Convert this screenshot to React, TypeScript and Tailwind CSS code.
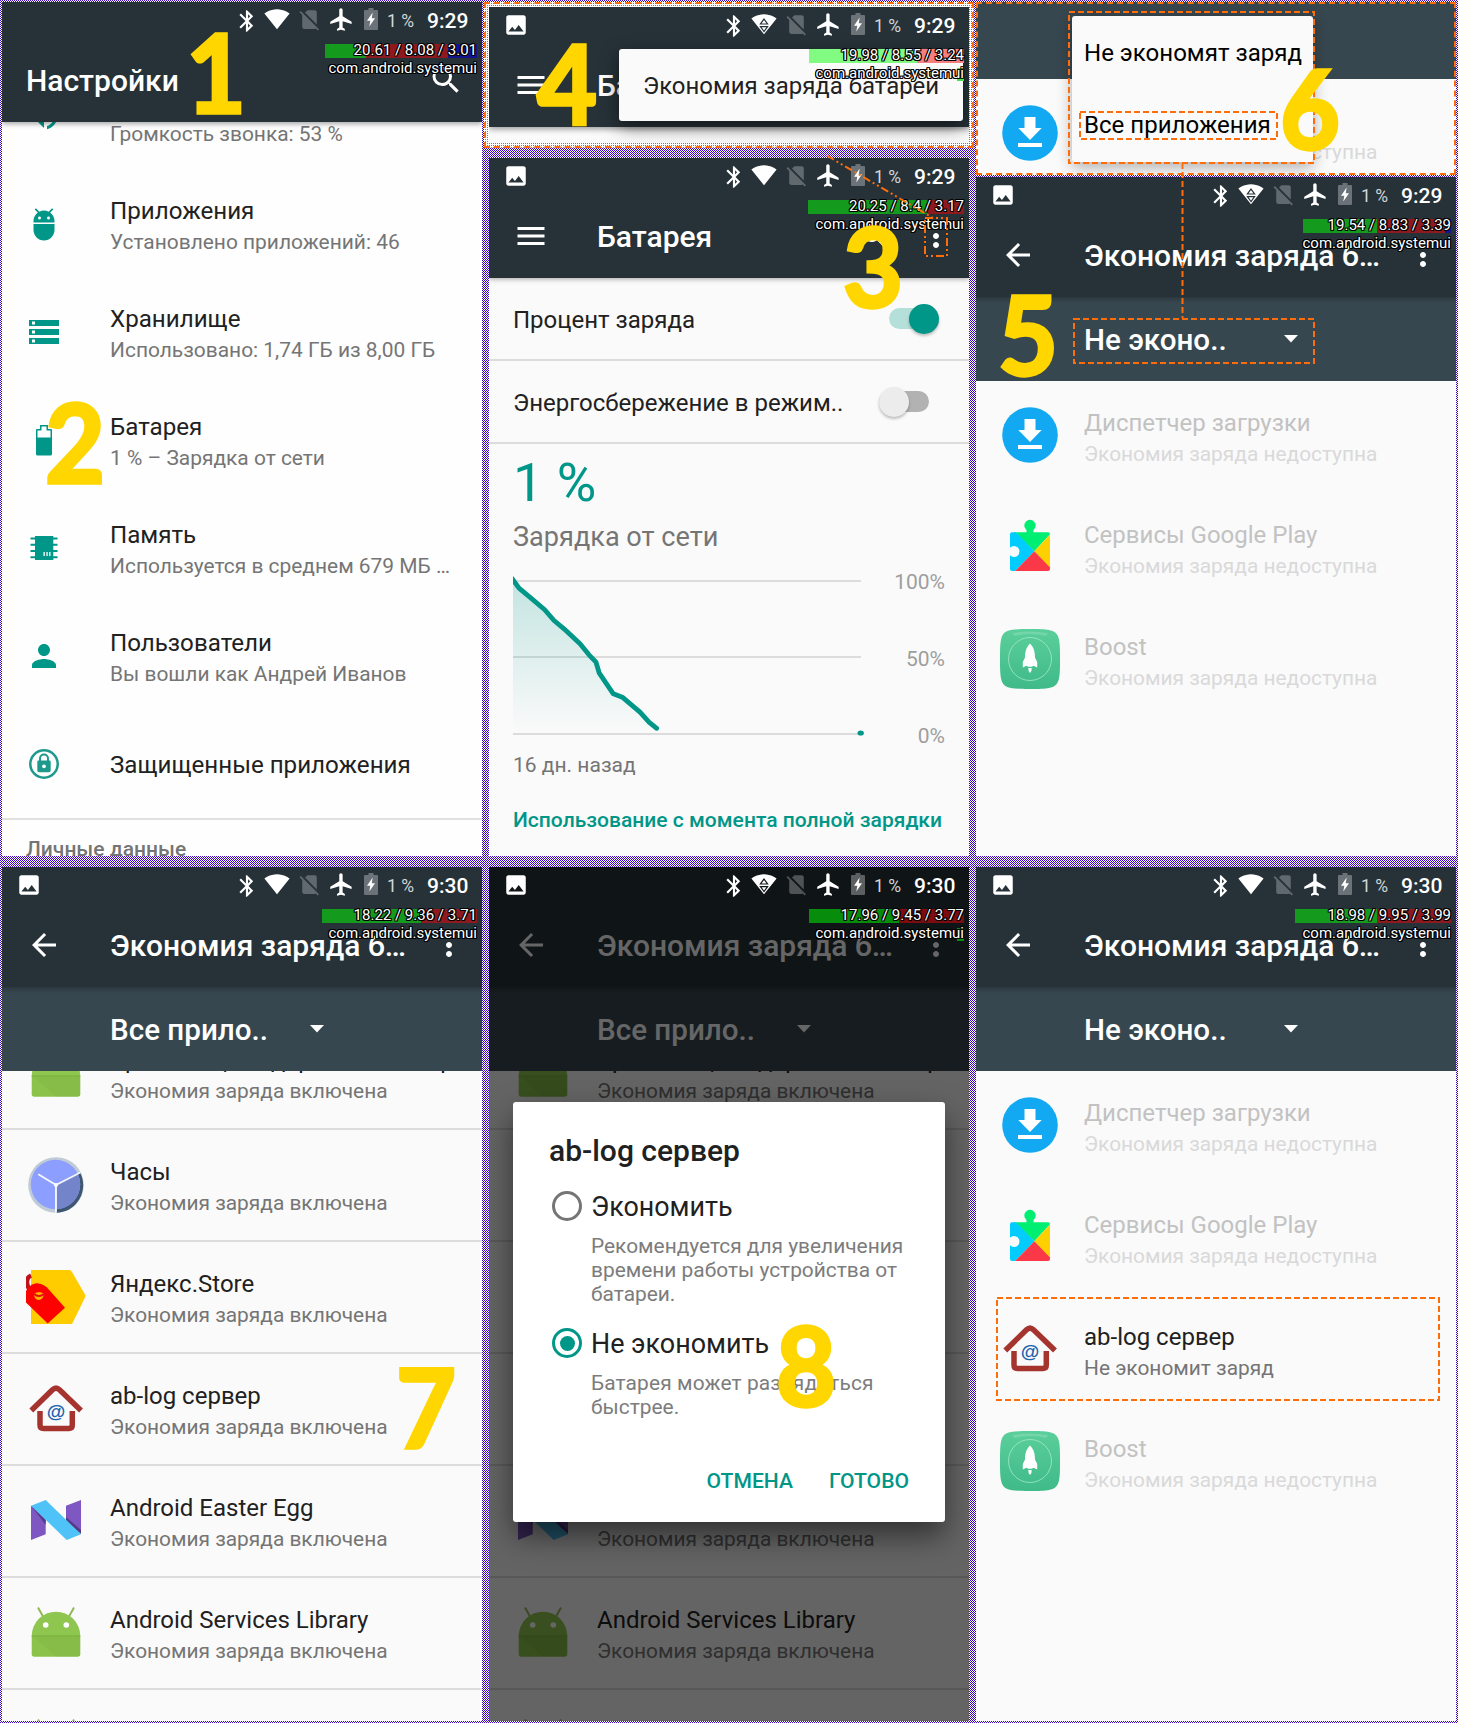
import React from "react";
import { MdAdb, MdStorage, MdPerson, MdVolumeUp, MdMenu, MdArrowBack, MdMoreVert, MdSearch } from "react-icons/md";

type Segment = { color: string; width: number };

function StatusBar({ time, gallery = true, wifiBusy = false, hole = "#263238" }: { time: string; gallery?: boolean; wifiBusy?: boolean; hole?: string }) {
  return (
    <div className="relative z-20 flex h-9 w-full items-start text-white">
      <div className="w-[232px] shrink-0 pl-[14px] pt-[5px]">
        {gallery && (
          <svg width="26" height="26" viewBox="0 0 24 24" fill="currentColor">
            <path d="M21 19V5c0-1.1-.9-2-2-2H5c-1.1 0-2 .9-2 2v14c0 1.100.9 2 2 2h14c1.100 0 2-.9 2-2zM8.500 13.500l2.500 3.010L14.500 12l4.500 6H5l3.500-4.500z" />
          </svg>
        )}
      </div>
      <svg className="mt-[6px] shrink-0" width="26" height="26" viewBox="0 0 24 24" fill="currentColor">
        <path d="M17.710 7.710L12 2h-1v7.590L6.410 5 5 6.410 10.590 12 5 17.590 6.410 19 11 14.410V22h1l5.710-5.710-4.300-4.290 4.300-4.290zM13 5.830l1.880 1.880L13 9.590V5.830zm1.880 10.460L13 18.170v-3.760l1.880 1.880z" />
      </svg>
      <svg className="ml-[4px] mt-[4px] shrink-0" width="26" height="26" viewBox="0 0 24 24">
        <path fill="currentColor" d="M12.010 21.490L23.640 7c-.45-.34-4.930-4-11.640-4C5.280 3 .81 6.660.36 7l11.630 14.490.01.01.01-.01z" />
        {wifiBusy && (
          <g fill="none" stroke={hole} strokeWidth="1.100">
            <path d="M12 7.500l3.300 4.500H8.700zM12 19l3.300-4.500H8.700z" />
          </g>
        )}
      </svg>
      <svg className="ml-[7px] mt-[5px] shrink-0" width="25" height="25" viewBox="0 0 24 24" fill="#fff" fillOpacity="0.27">
        <path d="M18.990 5c0-1.100-.89-2-1.990-2h-7L7.660 5.340 19 16.680 18.990 5zM3.650 3.880L2.380 5.150 5 7.770V19c0 1.100.9 2 2 2h10.010c.35 0 .67-.1.960-.260l1.880 1.880 1.270-1.270L3.650 3.880z" />
      </svg>
      <svg className="ml-[6px] mt-[4px] shrink-0" width="27" height="27" viewBox="0 0 24 24" fill="currentColor">
        <path d="M21 16v-2l-8-5V3.500c0-.83-.67-1.500-1.500-1.500S10 2.670 10 3.500V9l-8 5v2l8-2.500V19l-2 1.500V22l3.500-1 3.500 1v-1.500L13 19v-5.500l8 2.500z" />
      </svg>
      <svg className="ml-[9px] mt-[6px] shrink-0" width="14" height="22" viewBox="0 0 14 22">
        <path fill="#fff" fillOpacity="0.32" d="M4.500 0h5v2H13q1 0 1 1v18q0 1-1 1H1q-1 0-1-1V3q0-1 1-1h3.500z" />
        <path fill="#fff" d="M8.700 4.500L3 12.800h3.300L5.300 18.500 11 10.300H7.700z" />
      </svg>
      <span className="ml-[9px] mt-[8px] w-[40px] whitespace-pre text-[17.500px] leading-[22px] text-[#d3d6d7]">1 %</span>
      <span className="mt-[7px] text-[21px] font-medium leading-[24px]">{time}</span>
    </div>
  );
}

/* Load-average readout that floats above every screen. */
function LoadOverlay({ text, segments, busyTail }: { text: string; segments: Segment[]; busyTail?: string }) {
  return (
    <div className="absolute right-[5px] top-[42px] z-30 flex flex-col items-end text-[15px] text-white [text-shadow:1px_0_0_#000,-1px_0_0_#000,0_1px_0_#000,0_-1px_0_#000,1px_1px_0_#000,-1px_-1px_0_#000,1px_-1px_0_#000,-1px_1px_0_#000]">
      <div className="relative flex h-[14px]">
        {segments.map((s, i) => (
          <div key={i} className="h-full" style={{ width: s.width, background: s.color }} />
        ))}
        <span className="absolute right-0 top-[-3px] whitespace-nowrap leading-[18px]">{text}</span>
      </div>
      <div className="relative mt-px whitespace-nowrap leading-[18px]">
        {busyTail && <div className="absolute right-0 top-[4px] h-[13px] w-[7px]" style={{ background: busyTail }} />}
        <span className="relative">com.android.systemui</span>
      </div>
    </div>
  );
}

function Toolbar({ title, back }: { title: string; back?: boolean }) {
  return (
    <div className="flex h-[84px] items-center pl-6 pr-[15px] text-white">
      {back ? <MdArrowBack size={36} /> : <MdMenu size={36} />}
      <span className="ml-12 mt-[1px] flex-1 whitespace-nowrap text-[30px] font-medium leading-[36px]">{title}</span>
      {!back && <MdSearch size={36} className="mr-[25px]" />}
      <MdMoreVert size={36} />
    </div>
  );
}

function FilterBar({ label }: { label: string }) {
  return (
    <div className="flex h-[84px] items-center bg-[#37474f] bg-[linear-gradient(#2b383f,#37474f_6px)] pl-[108px] text-white">
      <span className="mt-[1px] w-[200px] whitespace-nowrap text-[29.600px] font-medium leading-[36px]">{label}</span>
      <svg width="14" height="8" viewBox="0 0 14 8" className="mb-[1px]" fill="currentColor">
        <path d="M0 0h14L7 7.500z" />
      </svg>
    </div>
  );
}

function AndroidIcon() {
  return (
    <svg width="60" height="60" viewBox="0 0 60 60">
      <path d="M12 4.500l5 9M48 4.500l-5 9" stroke="#93b858" strokeWidth="2" />
      <path d="M5.700 33a24.300 24.300 0 0 1 48.600 0z" fill="#8fc650" />
      <path d="M5.700 33h48.600v18q0 2.700-2.700 2.700H8.400q-2.700 0-2.700-2.700z" fill="#8bc34a" />
      <path d="M8 34l22 19.700h21.600q2.700 0 2.700-2.700V34z" fill="#000" fillOpacity=".035" />
      <path d="M5.700 33h48.600" stroke="#76a93d" strokeWidth="1.200" />
      <circle cx="19.700" cy="22" r="2.800" fill="#fff" />
      <circle cx="40.300" cy="22" r="2.800" fill="#fff" />
    </svg>
  );
}

function ClockIcon() {
  return (
    <svg width="60" height="60" viewBox="0 0 60 60">
      <circle cx="30" cy="30" r="27.800" fill="#bfcbd6" />
      <path d="M54 17.500A27.500 27.500 0 0 1 30 57.800V30z" fill="#3f5672" />
      <circle cx="29.500" cy="29.500" r="24.700" fill="#8c9eff" />
      <path d="M30 30L51.300 18A24.700 24.700 0 0 1 30 54.200z" fill="#7384cb" />
      <path d="M12.300 19.300L30 30M54.300 17.500L30 30V57.700" stroke="#fff" strokeOpacity=".92" strokeWidth="1.900" fill="none" />
      <circle cx="30" cy="30" r="2" fill="#fff" />
    </svg>
  );
}

function YandexStoreIcon() {
  return (
    <svg width="60" height="60" viewBox="0 0 60 60">
      <path d="M5 3h38q2 0 3 2l13 22.500q.8 1.500 0 3L46 57H5z" fill="#fc0" />
      <path d="M4 23C-.5 17 0 10.500 5 8.500" stroke="#c1121a" strokeWidth="4.500" fill="none" />
      <path d="M0 24q3-6 9-7.500 5-1 10 2.500l2 1.500L39 40.700 21.700 56.500 0 35.500z" fill="#f00" />
      <path d="M8 27q5-4 10 0-1 6-6 6-4-1-4-6z" fill="#ffb300" />
      <path d="M8 27q5 4 10 0" stroke="#e01010" strokeWidth="2" fill="none" />
    </svg>
  );
}

function HouseIcon() {
  return (
    <svg width="60" height="60" viewBox="0 0 60 60">
      <path d="M5.300 31.500L26.500 10.700q3.500-3.300 7 0L55 31.500" stroke="#a5342e" strokeWidth="5.500" fill="none" />
      <path d="M14 32v14q0 3.500 3.500 3.500h25.300q3.500 0 3.500-3.500V32" stroke="#a5342e" strokeWidth="5.500" fill="none" />
      <text x="30" y="38.500" textAnchor="middle" fontFamily="Liberation Sans" fontSize="19" fontWeight="bold" fill="#2162ae">@</text>
    </svg>
  );
}

function NougatIcon() {
  return (
    <svg width="60" height="60" viewBox="0 0 60 60">
      <path d="M5 14.700l14.700 10v18.600L5 49z" fill="#7e57c2" />
      <path d="M5 14.700l14.700 14.500v4.500z" fill="#553b86" />
      <path d="M40 14.700L55 9v33.500L40 31z" fill="#7e57c2" />
      <path d="M40 26l15 13v4L40 30z" fill="#553b86" />
      <path d="M5 14.700L19.700 9 55 43.300 40.700 49z" fill="#4fc3f7" />
    </svg>
  );
}

function DownloadIcon() {
  return (
    <svg width="60" height="60" viewBox="0 0 60 60">
      <circle cx="30" cy="30" r="27.800" fill="#12a9f2" />
      <path d="M24.500 14h11v11h6.200L30 37 18.300 25h6.200zM18 40h24v4H18z" fill="#fff" />
    </svg>
  );
}

function PlayServicesIcon() {
  return (
    <svg width="60" height="60" viewBox="0 0 60 60">
      <path d="M12 15.300h14.500V13a5.700 5.700 0 1 1 7 0v2.300H48q2 0 2 2L34.300 34.300 14 15.300z" fill="#00ee72" />
      <path d="M12 15.300h4L34.300 34.300 15 54h-3q-2 0-2-2V38.300a5.500 5.500 0 1 0 0-7.600V17.300q0-2 2-2z" fill="#0cf" />
      <path d="M50 17.500V51.500L34.300 34.300z" fill="#ffd000" />
      <path d="M34.300 34.300L50 50.500V52q0 2-2 2H15z" fill="#fb3848" />
    </svg>
  );
}

function BoostIcon() {
  return (
    <svg width="60" height="60" viewBox="0 0 60 60">
      <defs>
        <linearGradient id="boost" x1="0" y1="0" x2="0" y2="1">
          <stop offset="0" stopColor="#5bcf9b" />
          <stop offset="1" stopColor="#3fba89" />
        </linearGradient>
      </defs>
      <path d="M30 0C48 0 54 1 57 5.500S60 18 60 30s0 20-3 24.500S48 60 30 60 6 59 3 54.500 0 42 0 30 0 10 3 5.500 12 0 30 0z" fill="url(#boost)" />
      <path d="M12 4q17-3 36 0l-2 3Q30 3 15 7z" fill="#fff" fillOpacity=".16" />
      <circle cx="30" cy="30" r="21.500" fill="none" stroke="#a5e8c9" strokeWidth=".8" />
      <path d="M30 14.500c4.500 4.500 5 10 5 14l2.200 4.500v5.500l-3.500-1.800-2 1h-3.400l-2-1-3.500 1.800V33l2.200-4.500c0-4 .5-9.500 5-14zM28.300 39h3.400q.3 3-1.700 5-2-2-1.700-5z" fill="#fff" />
    </svg>
  );
}

function AppRow({ icon, title, sub, divider, muted }: { icon: React.ReactNode; title: string; sub: string; divider?: boolean; muted?: boolean }) {
  return (
    <div className={"flex h-[112px] shrink-0 items-center gap-6 pl-6 " + (divider ? "border-b-2 border-[#dcdcdc]" : "")}>
      <div className="size-[60px] shrink-0">{icon}</div>
      <div className={"flex flex-col whitespace-nowrap " + (divider ? "pt-1" : "pt-[6px]")}>
        <span className={"text-[24px] leading-[32px] " + (muted ? "text-[#c2c2c2]" : "text-[#212121]")}>{title}</span>
        <span className={"text-[20.880px] leading-[30px] " + (muted ? "text-[#d9d9d9]" : "text-[#757575]")}>{sub}</span>
      </div>
    </div>
  );
}

function SettingRow({ icon, title, sub }: { icon: React.ReactNode; title: string; sub?: string }) {
  return (
    <div className="flex h-[108px] shrink-0 items-center gap-12 pl-6">
      <div className="size-9 shrink-0 text-[#009688]">{icon}</div>
      <div className={"flex flex-col whitespace-nowrap " + (sub ? "pt-1" : "pt-[2px]")}>
        <span className="text-[24.150px] leading-[32px] text-[#212121]">{title}</span>
        {sub && <span className="text-[20.930px] leading-[30px] text-[#757575]">{sub}</span>}
      </div>
    </div>
  );
}

const batteryIcon = (
  <svg width="36" height="36" viewBox="0 0 36 36">
    <path d="M14 3h8v4h3q1 0 1 1v24q0 1.500-1.500 1.500h-13Q10 33.500 10 32V8q0-1 1-1h3z" fill="#009688" />
    <path d="M15.500 4.500h5v4h4v7h-13v-7h4z" fill="#fff" />
  </svg>
);

const memoryIcon = (
  <svg width="36" height="36" viewBox="0 0 36 36">
    <path d="M9 6h18.300v24H9zM4.500 7.500h27v2h-27zM4.500 13.700h27v2h-27zM4.500 20h27v2h-27zM4.500 26.200h27v2h-27z" fill="#009688" />
    <path d="M17.500 22h1.300v4h-1.300zM20.400 22h1.300v4h-1.300zM23.200 22h1.300v4h-1.300z" fill="#fff" />
  </svg>
);

const protectedIcon = (
  <svg width="36" height="36" viewBox="0 0 36 36">
    <circle cx="18" cy="18" r="13.700" fill="none" stroke="#1e9a8c" strokeWidth="2.500" />
    <path d="M14 15v-2.500a4 4 0 0 1 8 0V15" fill="none" stroke="#1e9a8c" strokeWidth="2" />
    <path d="M12.500 14.500h11q1.200 0 1.200 1.200v8.800q0 1.800-1.800 1.800h-9.800q-1.800 0-1.800-1.800v-8.800q0-1.200 1.200-1.200z" fill="#1e9a8c" />
    <circle cx="18" cy="20.300" r="1.900" fill="#fff" />
  </svg>
);

function SettingsScreen() {
  return (
    <section className="relative h-[854px] overflow-hidden bg-[#fefefe]">
      <header className="relative z-10 h-[120px] bg-[#263238] shadow-[0_2px_5px_rgba(0,0,0,0.35)]">
        <StatusBar time="9:29" gallery={false} />
        <div className="flex h-[84px] items-center justify-between pl-6 pr-[18px] text-white">
          <span className="mt-[1px] text-[30px] font-medium leading-[36px]">Настройки</span>
          <MdSearch size={36} />
        </div>
      </header>
      <LoadOverlay text="20.61 / 8.08 / 3.01" segments={[{ color: "#149b1e", width: 41 }, { color: "#8e1a1f", width: 82 }, { color: "#14148e", width: 29 }]} />
      <div className="-mt-[60px] flex flex-col">
        <SettingRow icon={<MdVolumeUp size={36} />} title="Звук" sub="Громкость звонка: 53 %" />
        <SettingRow icon={<MdAdb size={36} />} title="Приложения" sub="Установлено приложений: 46" />
        <SettingRow icon={<MdStorage size={36} />} title="Хранилище" sub="Использовано: 1,74 ГБ из 8,00 ГБ" />
        <SettingRow icon={batteryIcon} title="Батарея" sub="1 % – Зарядка от сети" />
        <SettingRow icon={memoryIcon} title="Память" sub="Используется в среднем 679 МБ …" />
        <SettingRow icon={<MdPerson size={36} />} title="Пользователи" sub="Вы вошли как Андрей Иванов" />
        <SettingRow icon={protectedIcon} title="Защищенные приложения" />
        <div className="h-[2px] bg-[#e0e0e0]" />
        <span className="pl-6 pt-[13px] text-[21px] font-medium leading-[32px] text-[#757575]">Личные данные</span>
      </div>
    </section>
  );
}

function MenuPopupScreen() {
  return (
    <div className="-ml-[5px] h-[146px] w-[490px] border-2 border-dashed border-[#ff6d0a] bg-[conic-gradient(#fff_25%,#2a90cc_0_50%,#fff_0_75%,#fff_0)] bg-[length:2px_2px] p-[3px]">
      <section className="relative h-[136px] w-[480px] overflow-hidden bg-[#fafafa]">
        <header className="h-[120px] bg-[#263238] shadow-[0_2px_6px_rgba(0,0,0,0.4)]">
          <StatusBar time="9:29" wifiBusy />
          <Toolbar title="Батарея" />
        </header>
        <div className="absolute left-[130px] top-[42px] z-10 flex h-[72px] w-[344px] items-center rounded-[3px] bg-[#fafafa] pl-6 pt-[2px] shadow-[0_6px_18px_rgba(0,0,0,0.5)]">
          <span className="whitespace-nowrap text-[23.950px] leading-[32px] text-[#212121]">Экономия заряда батареи</span>
        </div>
        <LoadOverlay text="19.98 / 8.55 / 3.24" segments={[{ color: "#82fb82", width: 108 }, { color: "#f87f7f", width: 47 }]} busyTail="#4be04b" />
      </section>
    </div>
  );
}

function Toggle({ on }: { on?: boolean }) {
  return (
    <div className={"flex h-[30px] w-[50px] items-center " + (on ? "mr-[30px]" : "mr-[40px]")}>
      <div className={"flex h-[21px] w-full items-center rounded-full " + (on ? "justify-end bg-[#b5e0da]" : "bg-[#b2b2b2]")}>
        <div className={"size-[30px] shrink-0 rounded-full shadow-[0_2px_3px_rgba(0,0,0,0.25)] " + (on ? "bg-[#009688]" : "bg-[#ececec]")} />
      </div>
    </div>
  );
}

function BatteryScreen() {
  return (
    <section className="relative h-[698px] overflow-hidden bg-[#fafafa]">
      <header className="relative z-10 h-[120px] bg-[#263238] shadow-[0_1px_5px_rgba(0,0,0,0.35)]">
        <StatusBar time="9:29" />
        <Toolbar title="Батарея" />
      </header>
      <LoadOverlay text="20.25 / 8.4 / 3.17" segments={[{ color: "#149b1e", width: 119 }, { color: "#8e1a1f", width: 37 }]} />
      <div className="flex h-[83px] items-center justify-between border-b-2 border-[#dcdcdc] pl-6 text-[24px] leading-[32px] text-[#212121]">
        <span className="pt-[2px]">Процент заряда</span>
        <Toggle on />
      </div>
      <div className="flex h-[83px] items-center justify-between border-b-2 border-[#dcdcdc] pl-6 text-[24px] leading-[32px] text-[#212121]">
        <span className="pt-[2px]">Энергосбережение в режим..</span>
        <Toggle />
      </div>
      <div className="flex flex-col px-6">
        <span className="pt-[7px] text-[54px] leading-[64px] text-[#009688]">1 %</span>
        <span className="mt-[6px] text-[27.100px] leading-[32px] text-[#757575]">Зарядка от сети</span>
        <div className="mt-[19px] flex h-[164px] justify-between">
          <svg width="356" height="164" viewBox="24 414 356 164">
            <defs>
              <linearGradient id="level" x1="0" y1="0" x2="0" y2="1">
                <stop offset="0" stopColor="#009688" stopOpacity=".22" />
                <stop offset="1" stopColor="#009688" stopOpacity="0" />
              </linearGradient>
            </defs>
            <path d="M24 423h348M24 499h348M24 576h348" stroke="#dcdcdc" strokeWidth="2" />
            <path d="M24 421L30 430.200 41.700 439.800 55.700 451.800 65 462.500 75 470.800 91 485.800 100 496.800 107 504.200 110.300 515.200 124.300 535.800 133.300 539.200 151 554.200 160 564.200 167.700 570.300V575H24z" fill="url(#level)" />
            <path d="M23 420.500L30 430.200 41.700 439.800 55.700 451.800 65 462.500 75 470.800 91 485.800 100 496.800 107 504.200 110.300 515.200 124.300 535.800 133.300 539.200 151 554.200 160 564.200 167.700 570.300" stroke="#009688" strokeWidth="4.800" strokeLinejoin="round" strokeLinecap="round" fill="none" />
            <ellipse cx="371.700" cy="575" rx="3.200" ry="2.600" fill="#009688" />
          </svg>
          <div className="-mt-[4px] flex h-[182px] flex-col justify-between text-right text-[21px] leading-[28px] text-[#9e9e9e]">
            <span>100%</span>
            <span>50%</span>
            <span>0%</span>
          </div>
        </div>
        <span className="mt-[15px] text-[21px] leading-[28px] text-[#757575]">16 дн. назад</span>
        <span className="mt-[27px] whitespace-nowrap text-[21.050px] font-medium leading-[28px] text-[#009688]">Использование с момента полной зарядки</span>
      </div>
    </section>
  );
}

function FilterPopupScreen() {
  return (
    <section className="relative h-[173px] overflow-hidden bg-[#fafafa]">
      <div className="h-[77px] bg-[#37474f]" />
      <div className="-mt-[2px]">
        <AppRow icon={<DownloadIcon />} title="Диспетчер загрузки" sub="Экономия заряда недоступна" muted />
      </div>
      <div className="absolute left-[96px] top-[14px] flex h-[146px] w-[241px] flex-col rounded-[3px] bg-[#fafafa] pl-[12px] text-[24.050px] leading-[32px] text-black shadow-[0_5px_16px_rgba(0,0,0,0.32)]">
        <span className="pt-[21px] whitespace-nowrap">Не экономят заряд</span>
        <span className="pt-[40px] whitespace-nowrap">Все приложения</span>
      </div>
      <div className="absolute inset-0 border-2 border-dashed border-[#ff6d0a]" />
    </section>
  );
}

function SaverHeader({ filter, time, wifiBusy, hole }: { filter: string; time: string; wifiBusy?: boolean; hole?: string }) {
  return (
    <header className="relative z-10">
      <div className="h-[120px] bg-[#263238]">
        <StatusBar time={time} wifiBusy={wifiBusy} hole={hole} />
        <Toolbar title="Экономия заряда б…" back />
      </div>
      <FilterBar label={filter} />
    </header>
  );
}

const unavailable = "Экономия заряда недоступна";
const enabled = "Экономия заряда включена";

function ExemptScreen() {
  return (
    <section className="relative h-[679px] overflow-hidden bg-[#fafafa]">
      <SaverHeader filter="Не эконо.." time="9:29" wifiBusy />
      <LoadOverlay text="19.54 / 8.83 / 3.39" segments={[{ color: "#149b1e", width: 74 }, { color: "#8e1a1f", width: 68 }, { color: "#14148e", width: 6 }]} />
      <div className="-mt-[2px] flex flex-col">
        <AppRow icon={<DownloadIcon />} title="Диспетчер загрузки" sub={unavailable} muted />
        <AppRow icon={<PlayServicesIcon />} title="Сервисы Google Play" sub={unavailable} muted />
        <AppRow icon={<BoostIcon />} title="Boost" sub={unavailable} muted />
      </div>
    </section>
  );
}

function AllAppsList() {
  return (
    <div className="-mt-[53px] flex flex-col">
      <AppRow icon={<AndroidIcon />} title="Хранилище содержимого загр" sub={enabled} divider />
      <AppRow icon={<ClockIcon />} title="Часы" sub={enabled} divider />
      <AppRow icon={<YandexStoreIcon />} title="Яндекс.Store" sub={enabled} divider />
      <AppRow icon={<HouseIcon />} title="ab-log сервер" sub={enabled} divider />
      <AppRow icon={<NougatIcon />} title="Android Easter Egg" sub={enabled} divider />
      <AppRow icon={<AndroidIcon />} title="Android Services Library" sub={enabled} divider />
      <AppRow icon={<AndroidIcon />} title="" sub="" divider />
    </div>
  );
}

function AllAppsScreen() {
  return (
    <section className="relative h-[854px] overflow-hidden bg-[#fafafa]">
      <SaverHeader filter="Все прило.." time="9:30" />
      <LoadOverlay text="18.22 / 9.36 / 3.71" segments={[{ color: "#149b1e", width: 99 }, { color: "#8e1a1f", width: 56 }]} />
      <AllAppsList />
    </section>
  );
}

function Radio({ on, label, children }: { on?: boolean; label: string; children: React.ReactNode }) {
  return (
    <div className="flex items-start gap-[9px] pl-[39px]">
      <div className={"mt-[2px] flex size-[30px] shrink-0 items-center justify-center rounded-full border-3 " + (on ? "border-[#009688]" : "border-[#757575]")}>
        {on && <div className="size-[15px] rounded-full bg-[#009688]" />}
      </div>
      <div className="flex flex-col">
        <span className="pt-[1px] text-[26.900px] leading-[34px] text-[#212121]">{label}</span>
        <span className="mt-[10px] text-[20.900px] leading-[24px] text-[#7c7c7c]">{children}</span>
      </div>
    </div>
  );
}

function DialogScreen() {
  return (
    <section className="relative h-[854px] overflow-hidden bg-[#fafafa]">
      <SaverHeader filter="Все прило.." time="" />
      <AllAppsList />
      <div className="absolute inset-0 z-10 bg-black/60" />
      <div className="absolute inset-x-0 top-0 z-20 h-9 bg-[#0f1416]">
        <StatusBar time="9:30" wifiBusy hole="#0f1416" />
      </div>
      <LoadOverlay text="17.96 / 9.45 / 3.77" segments={[{ color: "#078c0c", width: 90 }, { color: "#7d0c10", width: 65 }]} busyTail="#078c0c" />
      <div className="absolute left-[24px] top-[235px] z-20 flex h-[420px] w-[432px] flex-col rounded-[3px] bg-white shadow-[0_14px_30px_rgba(0,0,0,0.5)]">
        <span className="pl-9 pt-[31px] text-[30px] font-medium leading-[36px] text-[#212121]">ab-log сервер</span>
        <div className="mt-[20px]">
          <Radio label="Экономить">
            Рекомендуется для увеличения<br />времени работы устройства от<br />батареи.
          </Radio>
        </div>
        <div className="mt-[20px]">
          <Radio label="Не экономить" on>
            <span className="tracking-[0.12px]">Батарея может разрядиться</span><br />быстрее.
          </Radio>
        </div>
        <div className="mt-[48px] flex justify-end gap-9 pr-9 text-[21.100px] font-medium leading-[28px] text-[#009688]">
          <span>ОТМЕНА</span>
          <span>ГОТОВО</span>
        </div>
      </div>
    </section>
  );
}

function ResultScreen() {
  return (
    <section className="relative h-[854px] overflow-hidden bg-[#fafafa]">
      <SaverHeader filter="Не эконо.." time="9:30" />
      <LoadOverlay text="18.98 / 9.95 / 3.99" segments={[{ color: "#149b1e", width: 82 }, { color: "#8e1a1f", width: 74 }]} />
      <div className="-mt-[2px] flex flex-col">
        <AppRow icon={<DownloadIcon />} title="Диспетчер загрузки" sub={unavailable} muted />
        <AppRow icon={<PlayServicesIcon />} title="Сервисы Google Play" sub={unavailable} muted />
        <AppRow icon={<HouseIcon />} title="ab-log сервер" sub="Не экономит заряд" />
        <AppRow icon={<BoostIcon />} title="Boost" sub={unavailable} muted />
      </div>
    </section>
  );
}

const steps = [
  { n: "1", place: "left-[176px] top-[15px]" },
  { n: "2", place: "left-[35px] top-[385px]" },
  { n: "3", place: "left-[833px] top-[209px]" },
  { n: "4", place: "left-[527px] top-[26px]" },
  { n: "5", place: "left-[988px] top-[277px]" },
  { n: "6", place: "left-[1270px] top-[51px]" },
  { n: "7", place: "left-[386px] top-[1350px]" },
  { n: "8", place: "left-[766px] top-[1308px]" },
];

function Annotations() {
  return (
    <div className="pointer-events-none absolute inset-0 z-40">
      <svg className="absolute inset-0" width="1458" height="1723" viewBox="0 0 1458 1723" fill="none" stroke="#ff6d0a" strokeWidth="2">
        <path d="M827 155.700L933 218" strokeDasharray="8 3 2 3 2 3" />
        <rect x="925" y="218" width="22" height="38" strokeDasharray="8 3 2 3 2 3" />
        <g strokeDasharray="6 3">
          <rect x="1069" y="12" width="245" height="151" />
          <rect x="1080" y="112" width="197" height="27" />
          <path d="M1182.500 163v155" />
          <rect x="1074" y="319" width="240" height="44" />
          <rect x="997" y="1298" width="442" height="102" />
        </g>
      </svg>
      {steps.map((s) => (
        <span key={s.n} className={"absolute w-[80px] scale-x-[0.95] text-center font-['Lato'] text-[109px] font-bold leading-[112px] text-[#ffd600] [-webkit-text-stroke:3.5px_#ffd600] [stroke-linejoin:round] " + s.place}>
          {s.n}
        </span>
      ))}
    </div>
  );
}

export default function App() {
  return (
    <div className="relative h-[1723px] w-[1458px] overflow-hidden bg-[conic-gradient(#fff_25%,#4000c0_0_50%,#fff_0_75%,#4000c0_0)] bg-[length:2px_2px] font-['Roboto',sans-serif]">
      <main className="flex gap-[7px] pl-[2px] pt-[2px]">
        <div className="flex w-[480px] flex-col gap-[11px]">
          <SettingsScreen />
          <AllAppsScreen />
        </div>
        <div className="flex w-[480px] flex-col">
          <MenuPopupScreen />
          <div className="mt-[10px] flex flex-col gap-[11px]">
            <BatteryScreen />
            <DialogScreen />
          </div>
        </div>
        <div className="flex w-[480px] flex-col">
          <FilterPopupScreen />
          <div className="mt-[2px] flex flex-col gap-[11px]">
            <ExemptScreen />
            <ResultScreen />
          </div>
        </div>
      </main>
      <Annotations />
    </div>
  );
}
